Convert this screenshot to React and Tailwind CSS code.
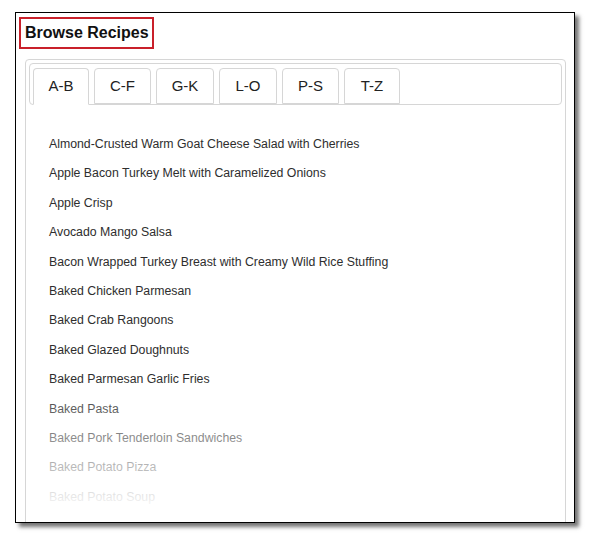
import React from 'react';

const tabs = [
  { label: 'A-B', w: 'w-[56px]' },
  { label: 'C-F', w: 'w-[57px]' },
  { label: 'G-K', w: 'w-[58px]' },
  { label: 'L-O', w: 'w-[58px]' },
  { label: 'P-S', w: 'w-[57px]' },
  { label: 'T-Z', w: 'w-[56px]' },
];

const recipes = [
  'Almond-Crusted Warm Goat Cheese Salad with Cherries',
  'Apple Bacon Turkey Melt with Caramelized Onions',
  'Apple Crisp',
  'Avocado Mango Salsa',
  'Bacon Wrapped Turkey Breast with Creamy Wild Rice Stuffing',
  'Baked Chicken Parmesan',
  'Baked Crab Rangoons',
  'Baked Glazed Doughnuts',
  'Baked Parmesan Garlic Fries',
  'Baked Pasta',
  'Baked Pork Tenderloin Sandwiches',
  'Baked Potato Pizza',
  'Baked Potato Soup',
];

const App = () => {
  return (
    <div className="w-[590px] h-[541px] bg-white pt-[12px] pl-[15px] font-['Liberation_Sans',Arial,sans-serif]">
      <div className="w-[560px] h-[511px] border border-black bg-white overflow-hidden shadow-[4px_4px_4px_rgba(0,0,0,0.55)]">
        <div className="mt-[4px] ml-[3px] w-[135px] h-[32px] border-2 border-[#c9202a] flex items-center pl-[4px]">
          <h1 className="text-[16px] font-bold text-[#111]">Browse Recipes</h1>
        </div>

        <div className="mt-[10px] ml-[9px] w-[541px] h-[480px] border border-[#d6d6d6] rounded-[4px] p-[3px] relative">
          <div className="h-[42px] border border-[#d6d6d6] rounded-[4px] flex gap-[5px] pl-[3px] pt-[4px] items-end">
            {tabs.map((t, i) => (
              <div
                key={t.label}
                className={`${t.w} h-[36px] border border-[#d6d6d6] rounded-t-[4px] flex items-center justify-center text-[15px] text-[#222] bg-white ${
                  i === 0 ? 'border-b-white -mb-[1px] h-[37px]' : ''
                }`}
              >
                {t.label}
              </div>
            ))}
          </div>

          <ul className="pt-[25px] pl-[20px] text-[12.3px] text-[#2e2e2e] leading-[29.4px]">
            {recipes.map((r) => (
              <li key={r}>{r}</li>
            ))}
          </ul>

          {/* fade-out over the bottom of the list */}
          <div className="absolute left-[2px] right-0 top-[318px] h-[130px] bg-gradient-to-b from-white/0 to-white/[0.97] pointer-events-none" />
          <div className="absolute left-[2px] right-0 top-[448px] bottom-0 bg-white/[0.97] pointer-events-none" />
        </div>
      </div>
    </div>
  );
};

export default App;
